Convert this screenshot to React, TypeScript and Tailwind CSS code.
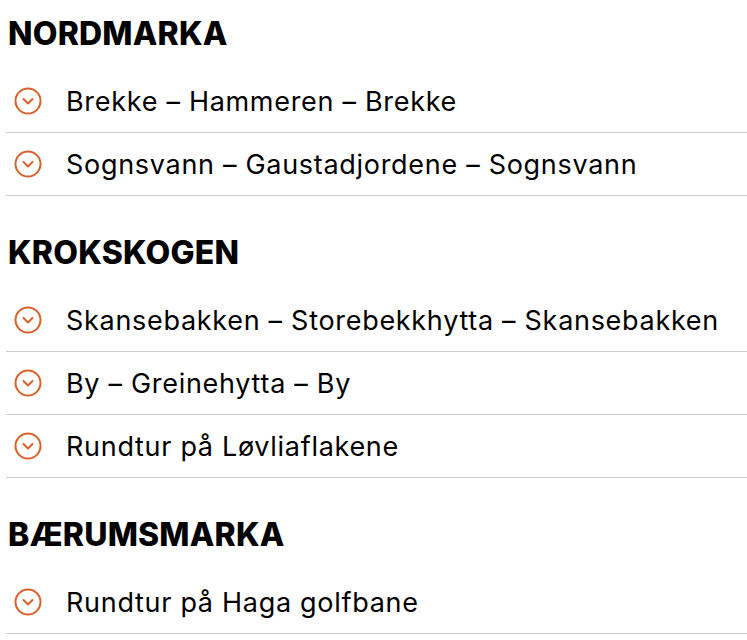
import React from "react";

const sections = [
  { title: "NORDMARKA", items: ["Brekke – Hammeren – Brekke", "Sognsvann – Gaustadjordene – Sognsvann"] },
  {
    title: "KROKSKOGEN",
    items: ["Skansebakken – Storebekkhytta – Skansebakken", "By – Greinehytta – By", "Rundtur på Løvliaflakene"],
  },
  { title: "BÆRUMSMARKA", items: ["Rundtur på Haga golfbane"] },
];

function ChevronCircle() {
  return (
    <svg width="28" height="28" viewBox="0 0 28 28" fill="none" className="shrink-0">
      <circle cx="14" cy="14" r="12.5" stroke="#d9602a" strokeWidth="2" />
      <path d="M9.5 12 L14 16.5 L18.5 12" stroke="#d9602a" strokeWidth="2" strokeLinecap="round" strokeLinejoin="round" />
    </svg>
  );
}

export default function App() {
  return (
    <div className="min-h-screen w-full bg-white pl-[6px] pt-[14px] text-black" style={{ fontFamily: "Inter, 'Liberation Sans', sans-serif" }}>
      {sections.map((s) => (
        <section key={s.title} className="mb-[37px]">
          <h2 className="pl-[2px] text-[32px] font-extrabold leading-[40px] tracking-[0.2px]">{s.title}</h2>
          <ul className="mt-[16px]">
            {s.items.map((item) => (
              <li key={item} className="flex h-[63px] items-center gap-[24px] border-b border-[#cccccc] pl-[8px]">
                <ChevronCircle />
                <span className="text-[27px] leading-none tracking-[0.7px]">{item}</span>
              </li>
            ))}
          </ul>
        </section>
      ))}
    </div>
  );
}
